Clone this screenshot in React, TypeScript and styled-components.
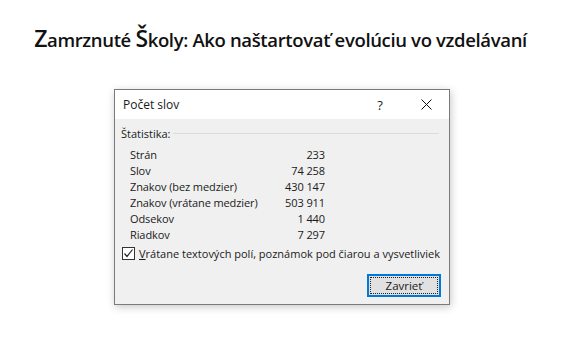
import React from 'react';
import styled, { createGlobalStyle } from 'styled-components';

const GlobalStyle = createGlobalStyle`
    html, body {
        margin: 0;
        padding: 0;
        background: #ffffff;
    }
`

const Page = styled.div`
    width: 569px;
    height: 357px;
    display: flex;
    flex-direction: column;
    align-items: center;
    padding-top: 25px;
    box-sizing: border-box;
`

const Heading = styled.h1`
    margin: 0 0 0 -8px;
    height: 26px;
    font-family: "Open Sans", sans-serif;
    font-weight: 600;
    font-size: 18.5px;
    line-height: 26px;
    letter-spacing: -0.35px;
    color: #111;
    white-space: nowrap;
`

const Big = styled.span`
    font-size: 23px;
`

const Dialog = styled.div`
    margin-top: 38px;
    margin-left: -5px;
    width: 336px;
    height: 216px;
    box-sizing: border-box;
    border: 1px solid #7a7a7a;
    background: #f0f0f0;
    box-shadow: 1px 2px 8px rgba(0, 0, 0, 0.22);
    display: flex;
    flex-direction: column;
    font-family: "Open Sans", sans-serif;
    font-size: 11px;
    color: #1a1a1a;
`

const TitleBar = styled.div`
    height: 29px;
    background: #fff;
    display: flex;
    align-items: center;
    padding-left: 8px;
    font-size: 12px;
`

const Title = styled.div`
    flex: 1;
`

const TitleButton = styled.div`
    width: 46px;
    height: 29px;
    display: flex;
    align-items: center;
    justify-content: center;
    font-size: 13px;
`

const Body = styled.div`
    flex: 1;
    display: flex;
    flex-direction: column;
    padding: 6px 8px 7px 6px;
`

const Group = styled.div`
    display: flex;
    align-items: center;
    height: 16px;
    gap: 3px;
`

const GroupLine = styled.div`
    flex: 1;
    height: 1px;
    background: #dcdcdc;
    margin-right: 2px;
`

const Stats = styled.div`
    margin-top: 5px;
    margin-left: 9px;
    width: 195px;
    display: grid;
    grid-template-columns: 1fr auto;
    grid-auto-rows: 16px;
    align-items: center;
    letter-spacing: -0.1px;
`

const Value = styled.div`
    text-align: right;
`

const CheckRow = styled.label`
    margin-top: 3px;
    height: 16px;
    display: flex;
    align-items: center;
    gap: 4px;
    padding-left: 1px;
`

const Box = styled.span`
    width: 11px;
    height: 11px;
    border: 1px solid #333;
    background: #fff;
    display: flex;
    align-items: center;
    justify-content: center;
`

const Footer = styled.div`
    margin-top: auto;
    display: flex;
    justify-content: flex-end;
`

const Button = styled.div`
    width: 74px;
    height: 23px;
    box-sizing: border-box;
    border: 2px solid #0078d7;
    background: #e1e1e1;
    padding: 1px;
    display: flex;
`

const Focus = styled.div`
    flex: 1;
    border: 1px dotted #222;
    display: flex;
    align-items: center;
    justify-content: center;
    font-size: 11.5px;
`

const stats: [string, string][] = [
    ['Strán', '233'],
    ['Slov', '74 258'],
    ['Znakov (bez medzier)', '430 147'],
    ['Znakov (vrátane medzier)', '503 911'],
    ['Odsekov', '1 440'],
    ['Riadkov', '7 297'],
]

export default function App() {
    return (
        <Page>
            <GlobalStyle />
            <Heading>
                <Big>Z</Big>amrznuté <Big>Š</Big>koly: Ako naštartovať evolúciu vo vzdelávaní
            </Heading>
            <Dialog>
                <TitleBar>
                    <Title>Počet slov</Title>
                    <TitleButton>?</TitleButton>
                    <TitleButton>
                        <svg width="11" height="11" viewBox="0 0 11 11">
                            <path d="M0.5 0.5 L10.5 10.5 M10.5 0.5 L0.5 10.5" stroke="#111" strokeWidth="1" />
                        </svg>
                    </TitleButton>
                </TitleBar>
                <Body>
                    <Group>
                        <span>Štatistika:</span>
                        <GroupLine />
                    </Group>
                    <Stats>
                        {stats.map(([label, value]) => (
                            <React.Fragment key={label}>
                                <div>{label}</div>
                                <Value>{value}</Value>
                            </React.Fragment>
                        ))}
                    </Stats>
                    <CheckRow>
                        <Box>
                            <svg width="11" height="11" viewBox="0 0 11 11">
                                <path d="M1.5 5.5 L4 8.5 L9.5 1.5" fill="none" stroke="#222" strokeWidth="1.2" />
                            </svg>
                        </Box>
                        <span><u>V</u>rátane textových polí, poznámok pod čiarou a vysvetliviek</span>
                    </CheckRow>
                    <Footer>
                        <Button>
                            <Focus>Zavrieť</Focus>
                        </Button>
                    </Footer>
                </Body>
            </Dialog>
        </Page>
    );
}
